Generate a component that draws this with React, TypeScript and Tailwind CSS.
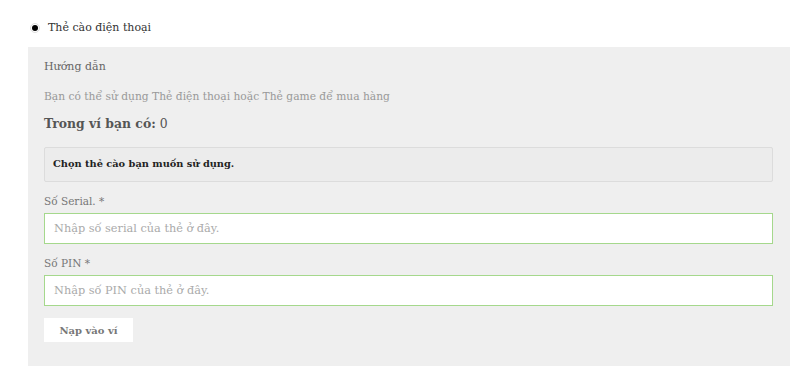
import React from 'react';

const font = { fontFamily: '"DejaVu Serif", "Liberation Serif", serif' };

export default function App() {
  return (
    <div className="w-[800px] h-[366px] bg-white overflow-hidden text-[#555]" style={font}>
      <div className="flex items-start gap-[8px] pl-[30px] pt-[22px] h-[47px]">
        <span className="mt-[1px] w-[10px] h-[10px] rounded-full border border-[#ddd] bg-white flex items-center justify-center">
          <span className="w-[6px] h-[6px] rounded-full bg-black" />
        </span>
        <span className="text-[11px] leading-[12px] text-[#333]">Thẻ cào điện thoại</span>
      </div>
      <div className="ml-[28px] w-[762px] h-[319px] bg-[#efefef] pl-[16px] pr-[17px] pt-[13px]">
        <p className="text-[11px] leading-[14px] text-[#666]">Hướng dẫn</p>
        <p className="mt-[16px] text-[10.7px] leading-[14px] text-[#999]">
          Bạn có thể sử dụng Thẻ điện thoại hoặc Thẻ game để mua hàng
        </p>
        <p className="mt-[12px] text-[12.4px] leading-[16px] text-[#555]">
          <span className="font-bold">Trong ví bạn có:</span> 0
        </p>
        <div className="mt-[15px] h-[35px] border border-[#dcdcdc] bg-[#ececec] flex items-center pl-[8px] rounded-[2px]">
          <span className="text-[9.8px] font-bold text-[#222]">Chọn thẻ cào bạn muốn sử dụng.</span>
        </div>
        <p className="mt-[12px] text-[10.5px] leading-[14px] text-[#777]">Số Serial. *</p>
        <input
          className="mt-[5px] w-full h-[31px] bg-white border border-[#a5d88c] outline-none px-[9px] text-[11.3px] placeholder:text-[#aaa]"
          style={font}
          placeholder="Nhập số serial của thẻ ở đây."
        />
        <p className="mt-[12px] text-[10.5px] leading-[14px] text-[#777]">Số PIN *</p>
        <input
          className="mt-[5px] w-full h-[31px] bg-white border border-[#a5d88c] outline-none px-[9px] text-[11.3px] placeholder:text-[#aaa]"
          style={font}
          placeholder="Nhập số PIN của thẻ ở đây."
        />
        <button
          className="mt-[12px] w-[89px] h-[24px] bg-white text-[10px] font-bold text-[#777] flex items-center justify-center"
          style={font}
        >
          Nạp vào ví
        </button>
      </div>
    </div>
  );
}
